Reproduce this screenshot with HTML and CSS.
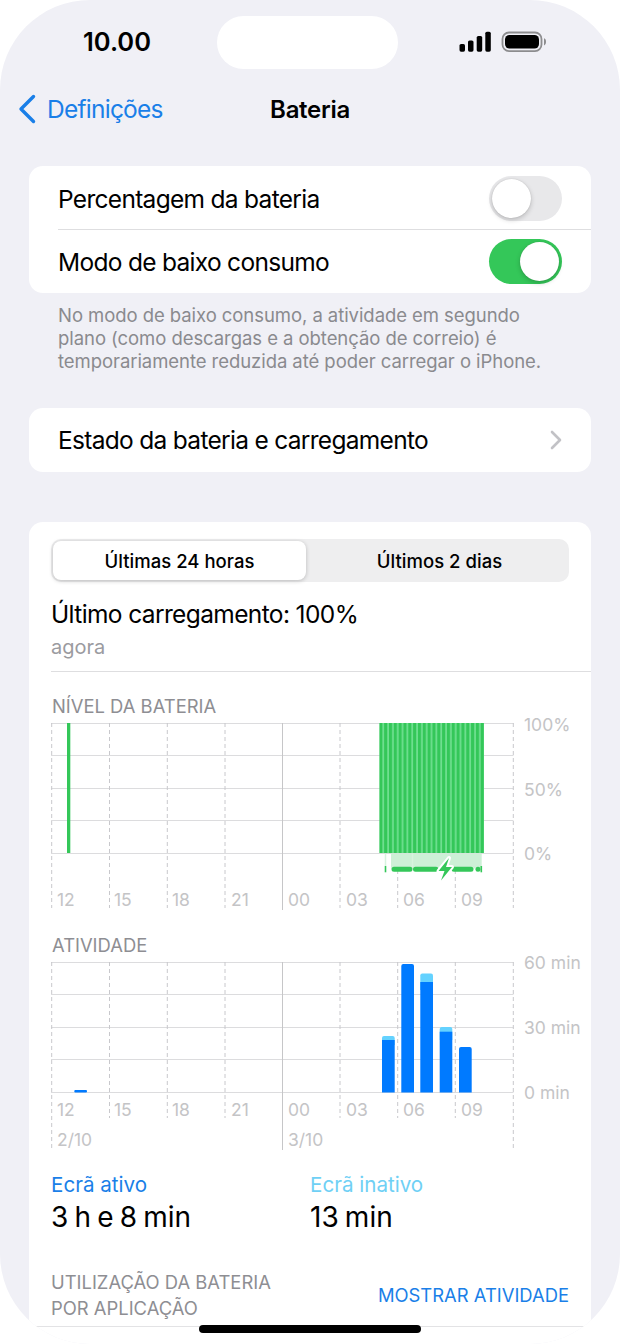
FILE: index.html
```html
<!DOCTYPE html>
<html lang="pt">
<head>
<meta charset="utf-8">
<title>Bateria</title>
<link rel="stylesheet" href="styles.css">
</head>
<body>
<div class="phone">
  <header class="status">
    <div class="time">10.00</div>
    <div class="island"></div>
    <svg class="status-icons" viewBox="459 30 90 24" width="90" height="24">
      <rect x="459.5" y="44" width="5.5" height="7.7" rx="1.6"/>
      <rect x="468" y="40.5" width="5.5" height="11.2" rx="1.6"/>
      <rect x="476.7" y="36" width="5.5" height="15.7" rx="1.6"/>
      <rect x="485.3" y="31.7" width="5.5" height="20" rx="1.6"/>
      <rect class="batt-out" x="502.5" y="32.5" width="39" height="18.6" rx="6.5"/>
      <rect x="505" y="35" width="34" height="13.6" rx="4.5"/>
      <path class="batt-cap" d="M544 38.2c1.5.5 2 1.8 2 3.6s-.5 3.100-2 3.600z"/>
    </svg>
  </header>

  <nav class="nav">
    <svg class="back-icon" viewBox="0 0 18 30" width="18" height="30"><path d="M15.500 2.500 3 15l12.500 12.500"/></svg>
    <span class="back-label">Definições</span>
    <span class="nav-title">Bateria</span>
  </nav>

  <section class="card first">
    <div class="row">
      <span class="row-label">Percentagem da bateria</span>
      <span class="switch"><span class="knob"></span></span>
    </div>
    <div class="row">
      <span class="row-label">Modo de baixo consumo</span>
      <span class="switch on"><span class="knob"></span></span>
    </div>
  </section>
  <p class="hint">No modo de baixo consumo, a atividade em segundo plano (como descargas e a obtenção de correio) é temporariamente reduzida até poder carregar o iPhone.</p>

  <section class="card second">
    <div class="row">
      <span>Estado da bateria e carregamento</span>
      <svg class="chevron" viewBox="0 0 12 20" width="12" height="20"><path d="M2 2l8 8-8 8"/></svg>
    </div>
  </section>

  <section class="card usage">
    <div class="segmented">
      <div class="seg active">Últimas 24 horas</div>
      <div class="seg rest">Últimos 2 dias</div>
    </div>
    <div class="last-charge">Último carregamento: 100%</div>
    <div class="ago">agora</div>
    <div class="divider"></div>

    <div class="chart-title level-title">NÍVEL DA BATERIA</div>
    <svg class="chart level" viewBox="29 720 562 192" width="562" height="192">
      <defs>
        <pattern id="stripes" patternUnits="userSpaceOnUse" x="379.300" y="0" width="4.830" height="10">
          <rect width="4.830" height="10" fill="#70e091"/>
          <rect width="3.100" height="10" fill="#34c759"/>
        </pattern>
      </defs>
      <g class="hgrid">
        <path d="M51 723.500H513.500M51 755.500H513.500M51 788.500H513.500M51 820.500H513.500M51 853.500H513.500"/>
      </g>
      <g class="vgrid">
        <path d="M51.700 723V908M109.500 723V908M167.300 723V908M225 723V908M340 723V908M397.700 723V908M455.300 723V908M513.300 723V908"/>
      </g>
      <path class="vsolid" d="M282.500 723V910"/>
      <rect class="g-dark" x="67" y="723" width="3.300" height="130"/>
      <rect x="379.300" y="723" width="104.700" height="130" fill="url(#stripes)"/>
      <rect class="g-pale" x="391" y="853.500" width="90.700" height="15"/>
      <path class="g-thin" d="M385.500 853.500V866M412.500 853.500V867"/>
      <path class="charge" d="M394 869.200H410M415.500 869.200H436M454 869.200H471"/>
      <circle class="g-dark" cx="478" cy="869.200" r="2.500"/>
      <rect class="g-dark" x="384.700" y="866" width="1.600" height="6.300"/>
      <rect class="g-dark" x="480.500" y="866" width="1.600" height="6.300"/>
      <path class="bolt" d="M449 858 438.500 871H444.500L441 880.500 452 867H446z"/>
      <g class="axis">
        <text x="57" y="906">12</text><text x="114" y="906">15</text><text x="172" y="906">18</text><text x="231" y="906">21</text><text x="288" y="906">00</text><text x="346" y="906">03</text><text x="403" y="906">06</text><text x="461" y="906">09</text>
        <text x="524" y="731">100%</text><text x="524" y="796">50%</text><text x="524" y="860">0%</text>
      </g>
    </svg>

    <div class="chart-title act-title">ATIVIDADE</div>
    <svg class="chart activity" viewBox="29 959 562 193" width="562" height="193">
      <g class="hgrid">
        <path d="M51 962.500H513.500M51 994.500H513.500M51 1027.500H513.500M51 1059.500H513.500M51 1092.500H513.500"/>
      </g>
      <g class="vgrid">
        <path d="M51.700 962V1148M109.500 962V1118M167.300 962V1118M225 962V1118M340 962V1118M397.700 962V1118M455.300 962V1118M513.300 962V1148"/>
      </g>
      <path class="vsolid" d="M282.500 962V1150"/>
      <rect class="b-dark" x="74.300" y="1090" width="12.700" height="2.500" rx="1"/>
      <path class="b-light" d="M382 1045V1038q0-2 2-2h8.700q2 0 2 2v7z"/>
      <path class="b-dark" d="M382 1040H394.700V1092.500H382z"/>
      <path class="b-dark" d="M401.300 1092.500V966q0-2 2-2H412q2 0 2 2V1092.500z"/>
      <path class="b-light" d="M420.300 990V975.500q0-2 2-2H431q2 0 2 2V990z"/>
      <path class="b-dark" d="M420.300 982H433V1092.500H420.300z"/>
      <path class="b-light" d="M439.700 1040V1029q0-2 2-2h8.600q2 0 2 2v11z"/>
      <path class="b-dark" d="M439.700 1031.700H452.300V1092.500H439.700z"/>
      <path class="b-dark" d="M459 1092.500V1049q0-2 2-2h8.700q2 0 2 2v43.500z"/>
      <g class="axis">
        <text x="57" y="1116">12</text><text x="114" y="1116">15</text><text x="172" y="1116">18</text><text x="231" y="1116">21</text><text x="288" y="1116">00</text><text x="346" y="1116">03</text><text x="403" y="1116">06</text><text x="461" y="1116">09</text>
        <text x="57" y="1146">2/10</text><text x="288" y="1146">3/10</text>
        <text x="524" y="969">60 min</text><text x="524" y="1034">30 min</text><text x="524" y="1099">0 min</text>
      </g>
    </svg>

    <div class="totals">
      <div class="total">
        <div class="total-label active-c">Ecrã ativo</div>
        <div class="total-value">3 h e 8 min</div>
      </div>
      <div class="total">
        <div class="total-label inactive-c">Ecrã inativo</div>
        <div class="total-value">13 min</div>
      </div>
    </div>

    <div class="by-app">
      <div class="by-app-title">UTILIZAÇÃO DA BATERIA<br>POR APLICAÇÃO</div>
      <div class="show-activity">MOSTRAR ATIVIDADE</div>
    </div>
    <div class="end-line"></div>
  </section>

  <div class="home-indicator"></div>
</div>
</body>
</html>
```

FILE: styles.css
```css
* { box-sizing: border-box; }
html, body { margin: 0; padding: 0; background: #fff; }
body { font-family: "Inter", "Liberation Sans", sans-serif; color: #000; }

.phone {
  position: relative;
  width: 620px;
  height: 1344px;
  overflow: hidden;
  background: #f0f0f6;
  border-radius: 90px;
}

.status {
  display: grid;
  grid-template-columns: 217px 181px 222px;
  height: 84px;
}
.time {
  padding-left: 83px;
  font-size: 25.500px;
  font-weight: 600;
  line-height: 84px;
}
.island {
  margin-top: 16px;
  height: 53px;
  background: #fff;
  border-radius: 27px;
}
.status-icons { margin: 30px 0 0 61px; display: block; fill: #000; }
.batt-out { fill: none; stroke: #8c8c8e; stroke-width: 1.800; }
.batt-cap { fill: #8c8c8e; }

.nav {
  position: relative;
  display: flex;
  align-items: center;
  height: 50px;
  padding-left: 18px;
}
.back-icon { fill: none; stroke: #1a7fe8; stroke-width: 3.400; stroke-linecap: round; stroke-linejoin: round; }
.back-label { margin-left: 11px; font-size: 24.500px; letter-spacing: -.75px; color: #1a7fe8; }
.nav-title {
  position: absolute;
  left: 0;
  right: 0;
  text-align: center;
  font-size: 24px;
  font-weight: 600;
  letter-spacing: -.3px;
}

.card {
  margin: 0 29px;
  background: #fff;
  border-radius: 14px;
}
.first { margin-top: 32px; }
.second { margin-top: 35px; }
.usage {
  margin-top: 50px;
  padding-top: 17px;
  height: 830px;
  border-radius: 14px 14px 0 0;
}

.row {
  display: flex;
  align-items: center;
  justify-content: space-between;
  height: 63px;
  margin-left: 29px;
  padding-right: 29px;
  font-size: 24.500px;
  letter-spacing: -.7px;
}
.first .row:first-child { padding-top: 2px; }
.row-label { padding-top: 0; }
.row + .row { height: 64px; border-top: 1px solid #dedee0; }
.second .row { height: 64px; }

.switch {
  display: block;
  position: relative;
  width: 73px;
  height: 45px;
  padding: 3px;
  border-radius: 23px;
  background: #e8e8ea;
}
.switch.on { background: #34c759; }
.knob {
  display: block;
  width: 39px;
  height: 39px;
  border-radius: 50%;
  background: #fff;
  box-shadow: 0 2px 5px rgba(0, 0, 0, .2), 0 0 1px rgba(0, 0, 0, .2);
}
.switch.on .knob { margin-left: 28px; }

.chevron { fill: none; stroke: #c2c2c6; stroke-width: 2.600; stroke-linecap: round; stroke-linejoin: round; }

.hint {
  margin: 11px 60px 0 58px;
  font-size: 18.500px;
  line-height: 23px;
  letter-spacing: -.06px;
  color: #8a8a8e;
}

.segmented {
  display: flex;
  margin: 0 22px;
  height: 43px;
  padding: 2px;
  background: #eeeeef;
  border-radius: 10px;
}
.seg {
  display: flex;
  align-items: center;
  justify-content: center;
  font-size: 18.500px;
  font-weight: 500;
  letter-spacing: .03px;
  border-radius: 8px;
}
.seg.active { flex: 0 0 253px; background: #fff; box-shadow: 0 1px 4px rgba(0, 0, 0, .22); }
.seg.rest { flex: 1; padding-left: 6px; }

.last-charge {
  margin: 16px 22px 0;
  font-size: 24.500px;
  letter-spacing: -.62px;
  line-height: 32px;
}
.ago {
  margin: 4px 22px 0;
  font-size: 20px;
  line-height: 26px;
  color: #9b9b9f;
}
.divider {
  margin: 11px 0 0 22px;
  height: 1px;
  background: #dedee0;
}

.chart-title {
  margin-left: 23px;
  font-size: 18.400px;
  line-height: 22px;
  color: #8e8e93;
}
.level-title { margin-top: 23px; }
.act-title { margin-top: 22px; }

.chart { display: block; margin-top: 3px; overflow: visible; }
.hgrid path { fill: none; stroke: #dcdcde; stroke-width: 1; }
.vgrid path { fill: none; stroke: #c8c8cc; stroke-width: 1; stroke-dasharray: 4 3; }
.vsolid { fill: none; stroke: #c6c6c8; stroke-width: 1; }
.axis text {
  font-family: "Inter", "Liberation Sans", sans-serif;
  font-size: 17.500px;
  fill: #c4c4c6;
}
.g-dark { fill: #34c759; }
.g-pale { fill: #cdf0d6; }
.g-thin { fill: none; stroke: #d8f3df; stroke-width: 1.500; }
.charge { fill: none; stroke: #34c759; stroke-width: 5; stroke-linecap: round; }
.bolt { fill: #34c759; stroke: #fff; stroke-width: 4; stroke-linejoin: round; paint-order: stroke; }
.b-dark { fill: #007aff; }
.b-light { fill: #64d2ff; }

.totals {
  display: grid;
  grid-template-columns: 259px 1fr;
  margin: 20px 22px 0;
}
.total-label { font-size: 20.600px; line-height: 26px; }
.active-c { color: #1a7fe8; }
.inactive-c { color: #6fd0f5; }
.total-value { margin-top: 2px; font-size: 28px; line-height: 34px; word-spacing: -1.700px; }

.by-app {
  display: flex;
  align-items: center;
  justify-content: space-between;
  margin: 35px 22px 0;
}
.by-app-title { font-size: 18.400px; line-height: 26px; color: #8e8e93; }
.show-activity { font-size: 18.400px; line-height: 26px; color: #1a7fe8; }
.end-line { margin: 5px 3px 0 4px; height: 1px; background: #e3e3e5; }

.home-indicator {
  position: absolute;
  left: 199px;
  top: 1325px;
  width: 222px;
  height: 8px;
  border-radius: 4px;
  background: #000;
}
```
